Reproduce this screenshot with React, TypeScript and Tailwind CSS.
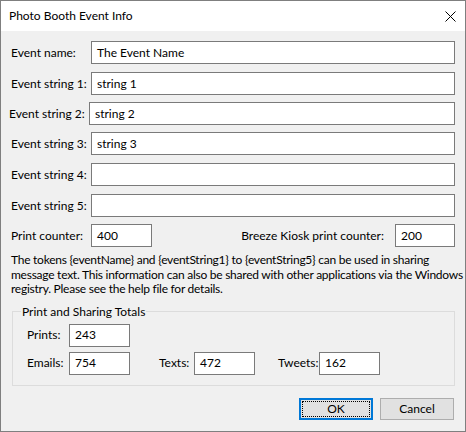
import React from 'react';

const font = { fontFamily: 'Lato, "Noto Sans", sans-serif' };

function Field({ value, className = '' }: { value?: string; className?: string }) {
  return (
    <div
      className={`h-[23px] border border-[#7a7a7a] bg-white pl-[5px] flex items-center text-[12px] text-black ${className}`}
    >
      {value}
    </div>
  );
}

export default function App() {
  const strings = [
    { label: 'Event string 1:', value: 'string 1', mt: 'mt-[8px]', shift: false },
    { label: 'Event string 2:', value: 'string 2', mt: 'mt-[7px]', shift: true },
    { label: 'Event string 3:', value: 'string 3', mt: 'mt-[7px]', shift: false },
    { label: 'Event string 4:', value: '', mt: 'mt-[8px]', shift: false },
    { label: 'Event string 5:', value: '', mt: 'mt-[8px]', shift: false },
  ];

  return (
    <div
      className="w-[466px] h-[432px] border border-[#7f7f7f] bg-[#f0f0f0] flex flex-col text-[12px] text-black whitespace-nowrap overflow-hidden"
      style={font}
    >
      {/* Title bar */}
      <div className="h-[30px] bg-white flex items-center justify-between pl-[8px] pr-[9px] shrink-0">
        <span className="text-[12px]">Photo Booth Event Info</span>
        <svg width="11" height="11" viewBox="0 0 11 11" className="mt-[1px]">
          <path d="M0.5 0.5 L10.5 10.5 M10.5 0.5 L0.5 10.5" stroke="#000" strokeWidth="1" />
        </svg>
      </div>

      {/* Body */}
      <div className="flex flex-col px-[10px] pt-[10px]">
        <div className="flex items-center">
          <span className="w-[80px]">Event name:</span>
          <Field value="The Event Name" className="flex-1" />
        </div>

        {strings.map((s) => (
          <div key={s.label} className={`flex items-center ${s.mt}`}>
            <span className={s.shift ? 'w-[81px] -ml-[2px]' : 'w-[80px]'}>{s.label}</span>
            <Field value={s.value} className={`flex-1 ${s.shift ? '-ml-[1px]' : ''}`} />
          </div>
        ))}

        <div className="flex items-center mt-[7px]">
          <span className="w-[80px]">Print counter:</span>
          <Field value="400" className="w-[61px]" />
          <span className="ml-auto mr-[11px]">Breeze Kiosk print counter:</span>
          <Field value="200" className="w-[60px]" />
        </div>

        <p className="mt-[6px] leading-[14.5px] tracking-[-0.25px]">
          The tokens {'{eventName}'} and {'{eventString1}'} to {'{eventString5}'} can be used in sharing
          <br />
          message text. This information can also be shared with other applications via the Windows
          <br />
          registry. Please see the help file for details.
        </p>

        <fieldset className="mt-[7px] ml-[1px] border border-[#dcdcdc] h-[82px] px-[8px]">
          <legend className="px-[1px] text-[12px] leading-[15px]">Print and Sharing Totals</legend>
          <div className="flex items-center mt-[5px] pl-[6px]">
            <span className="w-[42px]">Prints:</span>
            <Field value="243" className="w-[61px]" />
          </div>
          <div className="flex items-center mt-[5px] pl-[6px]">
            <span className="w-[42px]">Emails:</span>
            <Field value="754" className="w-[61px]" />
            <span className="ml-[29px] w-[35px]">Texts:</span>
            <Field value="472" className="w-[61px]" />
            <span className="ml-[23px] w-[41px]">Tweets:</span>
            <Field value="162" className="w-[61px]" />
          </div>
        </fieldset>

        <div className="flex justify-end gap-[7px] mt-[12px] pr-[1px]">
          <button className="w-[74px] h-[22px] border-2 border-[#0078d7] bg-[#e1e1e1] p-[1px] flex">
            <span className="flex-1 border border-dotted border-black flex items-center justify-center">
              OK
            </span>
          </button>
          <button className="w-[74px] h-[22px] border border-[#adadad] bg-[#e1e1e1] flex items-center justify-center">
            Cancel
          </button>
        </div>
      </div>
    </div>
  );
}
